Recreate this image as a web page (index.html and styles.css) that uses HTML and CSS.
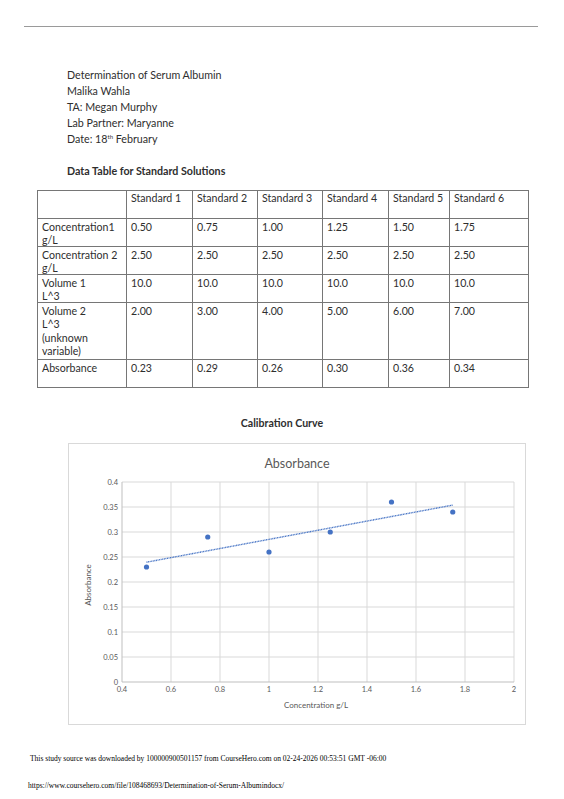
FILE: index.html
```html
<!DOCTYPE html>
<html>
<head>
<meta charset="utf-8">
<link rel="stylesheet" href="styles.css">
</head>
<body>
<div class="rule"></div>
<div class="doc">
  <div class="info">
    <p>Determination of Serum Albumin</p>
    <p>Malika Wahla</p>
    <p>TA: Megan Murphy</p>
    <p>Lab Partner: Maryanne</p>
    <p>Date: 18<sup>th</sup> February</p>
  </div>
  <h2 class="heading">Data Table for Standard Solutions</h2>
  <table class="data">
    <colgroup>
      <col class="c0"><col class="c1"><col class="c2"><col class="c3"><col class="c4"><col class="c5"><col class="c6">
    </colgroup>
    <tr class="r-head"><td></td><td>Standard 1</td><td>Standard 2</td><td>Standard 3</td><td>Standard 4</td><td>Standard 5</td><td>Standard 6</td></tr>
    <tr><td>Concentration1 g/L</td><td>0.50</td><td>0.75</td><td>1.00</td><td>1.25</td><td>1.50</td><td>1.75</td></tr>
    <tr><td>Concentration 2 g/L</td><td>2.50</td><td>2.50</td><td>2.50</td><td>2.50</td><td>2.50</td><td>2.50</td></tr>
    <tr><td>Volume 1<br>L^3</td><td>10.0</td><td>10.0</td><td>10.0</td><td>10.0</td><td>10.0</td><td>10.0</td></tr>
    <tr class="tall"><td>Volume 2<br>L^3<br>(unknown variable)</td><td>2.00</td><td>3.00</td><td>4.00</td><td>5.00</td><td>6.00</td><td>7.00</td></tr>
    <tr class="last"><td>Absorbance</td><td>0.23</td><td>0.29</td><td>0.26</td><td>0.30</td><td>0.36</td><td>0.34</td></tr>
  </table>
  <h2 class="chart-title">Calibration Curve</h2>
  <div class="chart">
    <svg width="458" height="282" viewBox="0 0 458 282">
      <text class="ttl" x="229" y="25" text-anchor="middle">Absorbance</text>
      <g class="grid">
        <line x1="54" y1="39" x2="446" y2="39"/>
        <line x1="54" y1="64" x2="446" y2="64"/>
        <line x1="54" y1="89" x2="446" y2="89"/>
        <line x1="54" y1="114" x2="446" y2="114"/>
        <line x1="54" y1="139" x2="446" y2="139"/>
        <line x1="54" y1="164" x2="446" y2="164"/>
        <line x1="54" y1="189" x2="446" y2="189"/>
        <line x1="54" y1="214" x2="446" y2="214"/>
        <line x1="103" y1="39" x2="103" y2="239"/>
        <line x1="152" y1="39" x2="152" y2="239"/>
        <line x1="201" y1="39" x2="201" y2="239"/>
        <line x1="250" y1="39" x2="250" y2="239"/>
        <line x1="299" y1="39" x2="299" y2="239"/>
        <line x1="348" y1="39" x2="348" y2="239"/>
        <line x1="397" y1="39" x2="397" y2="239"/>
        <line x1="446" y1="39" x2="446" y2="239"/>
      </g>
      <g class="axis">
        <line x1="54" y1="39" x2="54" y2="239"/>
        <line x1="54" y1="239" x2="446" y2="239"/>
      </g>
      <g class="ytick" text-anchor="end">
        <text x="50" y="41.7">0.4</text>
        <text x="50" y="66.7">0.35</text>
        <text x="50" y="91.7">0.3</text>
        <text x="50" y="116.7">0.25</text>
        <text x="50" y="141.7">0.2</text>
        <text x="50" y="166.7">0.15</text>
        <text x="50" y="191.7">0.1</text>
        <text x="50" y="216.7">0.05</text>
        <text x="50" y="241.7">0</text>
      </g>
      <g class="ytick" text-anchor="middle">
        <text x="54" y="248.5">0.4</text>
        <text x="103" y="248.5">0.6</text>
        <text x="152" y="248.5">0.8</text>
        <text x="201" y="248.5">1</text>
        <text x="250" y="248.5">1.2</text>
        <text x="299" y="248.5">1.4</text>
        <text x="348" y="248.5">1.6</text>
        <text x="397" y="248.5">1.8</text>
        <text x="446" y="248.5">2</text>
      </g>
      <text class="atitle" x="248" y="265" text-anchor="middle">Concentration g/L</text>
      <text class="atitle" transform="translate(23 142) rotate(-90)" text-anchor="middle">Absorbance</text>
      <line class="trend" x1="78.5" y1="119.2" x2="384.75" y2="62.1"/>
      <g class="pts">
        <circle cx="78.5" cy="124" r="2.6"/>
        <circle cx="139.75" cy="94" r="2.6"/>
        <circle cx="201" cy="109" r="2.6"/>
        <circle cx="262.25" cy="89" r="2.6"/>
        <circle cx="323.5" cy="59" r="2.6"/>
        <circle cx="384.75" cy="69" r="2.6"/>
      </g>
    </svg>
  </div>
</div>
<div class="footer">
  <p class="f1">This study source was downloaded by 100000900501157 from CourseHero.com on 02-24-2026 00:53:51 GMT -06:00</p>
  <p class="f2">https://www.coursehero.com/file/108468693/Determination-of-Serum-Albumindocx/</p>
</div>
</body>
</html>
```
FILE: styles.css
```css
html, body {
  margin: 0;
  padding: 0;
  background: #fff;
}
body {
  width: 564px;
  height: 799px;
  overflow: hidden;
  font-family: Lato, "Noto Sans", sans-serif;
  color: #2e2e2e;
}
.rule {
  margin: 26px 26px 0 24px;
  border-top: 1px solid #9a9a9a;
  height: 0;
}
.doc {
  padding-top: 40px;
}
.info {
  padding-left: 67px;
  font-size: 10.7px;
  line-height: 16px;
}
.info p {
  margin: 0;
}
.info sup {
  font-size: 6px;
  line-height: 0;
  vertical-align: 4px;
}
.heading {
  margin: 16px 0 0 67px;
  font-size: 10.7px;
  line-height: 16px;
  font-weight: bold;
}
.data {
  margin: 11px 0 0 37px;
  border-collapse: collapse;
  table-layout: fixed;
  width: 491px;
  font-size: 10.6px;
  line-height: 12.5px;
}
.data td {
  border: 1px solid #767676;
  padding: 2px 4px 0 4px;
  vertical-align: top;
  height: 28px;
  box-sizing: border-box;
}
.data tr {
  height: 28px;
}
.data .r-head td {
  padding-top: 1px;
  line-height: 13px;
}
.data .tall td {
  line-height: 13.4px;
  height: 57px;
}
.data .tall {
  height: 57px;
}
.data .last td {
  height: 28px;
  line-height: 13px;
}
.data .last {
  height: 28px;
}
.c0 { width: 89px; }
.c1 { width: 66px; }
.c2 { width: 65px; }
.c3 { width: 65px; }
.c4 { width: 66px; }
.c5 { width: 61px; }
.c6 { width: 79px; }
.chart-title {
  margin: 27px 0 0 0;
  text-align: center;
  font-size: 10.6px;
  line-height: 16px;
  font-weight: bold;
}
.chart {
  margin: 12px 0 0 68px;
  width: 458px;
  height: 282px;
  box-sizing: border-box;
  border: 1px solid #d9d9d9;
}
.chart svg {
  display: block;
  margin: -1px 0 0 -1px;
}
.ttl {
  font-family: Lato, sans-serif;
  font-size: 12.5px;
  fill: #595959;
}
.grid line {
  stroke: #d9d9d9;
  stroke-width: 1;
}
.axis line {
  stroke: #bfbfbf;
  stroke-width: 1;
}
.ytick text {
  font-family: Lato, sans-serif;
  font-size: 7.5px;
  fill: #595959;
}
.atitle {
  font-family: Lato, sans-serif;
  font-size: 8px;
  fill: #595959;
}
.trend {
  stroke: #4472c4;
  stroke-width: 1.4;
  stroke-dasharray: 1 0.6;
}
.pts circle {
  fill: #4472c4;
}
.footer {
  margin-top: 29px;
  font-family: "Liberation Serif", serif;
  font-size: 7.5px;
  color: #000;
}
.footer p {
  margin: 0;
  line-height: 9px;
}
.f1 {
  padding-left: 30px;
}
.f2 {
  padding-left: 28px;
  margin-top: 18px !important;
}
```
